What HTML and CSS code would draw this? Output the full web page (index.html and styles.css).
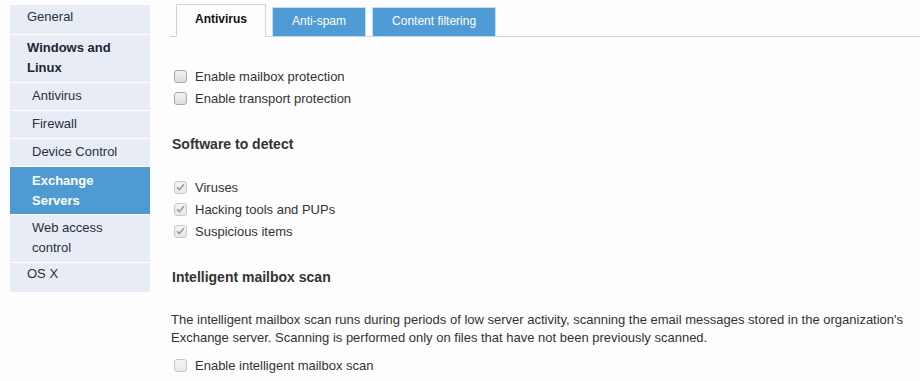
FILE: index.html
```html
<!DOCTYPE html>
<html lang="en">

<head>
    <meta charset="UTF-8">
    <meta name="viewport" content="width=device-width, initial-scale=1.0">
    <title>Exchange Servers</title>
    <link rel="stylesheet" href="styles.css">
</head>

<body>
    <div class="page">
        <ul class="sidebar">
            <li class="item top">General</li>
            <li class="item group">Windows and<br>Linux</li>
            <li class="item sub">Antivirus</li>
            <li class="item sub">Firewall</li>
            <li class="item sub">Device Control</li>
            <li class="item sub active">Exchange<br>Servers</li>
            <li class="item sub">Web access<br>control</li>
            <li class="item last">OS X</li>
        </ul>

        <div class="content">
            <div class="tabs">
                <div class="tab current">Antivirus</div>
                <div class="tab">Anti-spam</div>
                <div class="tab">Content filtering</div>
            </div>

            <div class="options first">
                <label class="check"><span class="box"></span>Enable mailbox protection</label>
                <label class="check"><span class="box"></span>Enable transport protection</label>
            </div>

            <h3>Software to detect</h3>
            <div class="options">
                <label class="check disabled"><span class="box"><svg width="9" height="8" viewBox="0 0 9 8"><path d="M1 4.2 3.4 6.6 8 1.2" fill="none" stroke="#9a9a9a" stroke-width="1.6"/></svg></span>Viruses</label>
                <label class="check disabled"><span class="box"><svg width="9" height="8" viewBox="0 0 9 8"><path d="M1 4.2 3.4 6.6 8 1.2" fill="none" stroke="#9a9a9a" stroke-width="1.6"/></svg></span>Hacking tools and PUPs</label>
                <label class="check disabled"><span class="box"><svg width="9" height="8" viewBox="0 0 9 8"><path d="M1 4.2 3.4 6.6 8 1.2" fill="none" stroke="#9a9a9a" stroke-width="1.6"/></svg></span>Suspicious items</label>
            </div>

            <h3>Intelligent mailbox scan</h3>
            <p class="note">The intelligent mailbox scan runs during periods of low server activity, scanning the email messages stored in the organization's Exchange server. Scanning is performed only on files that have not been previously scanned.</p>
            <div class="options last">
                <label class="check disabled"><span class="box"></span>Enable intelligent mailbox scan</label>
            </div>
        </div>
    </div>
</body>

</html>
```

FILE: styles.css
```css
* {
    margin: 0;
    padding: 0;
    box-sizing: border-box;
    font-family: "Liberation Sans", Arial, sans-serif;
}

body {
    background: #fdfdfd;
    color: #333;
    font-size: 13px;
}

.page {
    display: flex;
    align-items: flex-start;
}

/* menu da esquerda */
.sidebar {
    list-style: none;
    width: 140px;
    margin: 5px 0 0 10px;
    padding: 2px 0;
    background: #e8edf5;
}

.item {
    padding: 3px 8px 4px 17px;
    line-height: 20px;
    color: #27303d;
    border-bottom: 1px solid #fff;
}

.item.top {
    padding-top: 0;
    padding-bottom: 7px;
}

.item.group {
    font-weight: bold;
    color: #1d2533;
}

.item.sub {
    padding-left: 22px;
}

.item.active {
    padding-top: 4px;
    padding-bottom: 3px;
    background: #4e9ad3;
    color: #fff;
    font-weight: bold;
}

.item.last {
    padding-top: 1px;
    padding-bottom: 6px;
    border-bottom: none;
}

.content {
    flex: 1;
    margin-left: 20px;
}

/* abas */
.tabs {
    display: flex;
    align-items: flex-end;
    gap: 6px;
    height: 37px;
    padding-left: 6px;
    border-bottom: 1px solid #c6d9eb;
}

.tab {
    height: 29px;
    padding: 0 19px;
    line-height: 27px;
    font-size: 12px;
    color: #fff;
    background: #4f9bd5;
    border: 1px solid #c9def0;
    border-bottom: none;
}

.tab.current {
    height: 33px;
    margin-bottom: -1px;
    padding: 0 18px 3px;
    line-height: 28px;
    font-weight: bold;
    color: #111;
    background: #fdfdfd;
    border: 1px solid #c6d9eb;
    border-bottom: 1px solid #fdfdfd;
}

.options {
    margin-top: 22px;
    padding-left: 4px;
}

.options.first {
    margin-top: 28px;
}

.options.last {
    margin-top: 7px;
}

.check {
    display: flex;
    align-items: center;
    height: 22px;
    color: #333;
}

.box {
    display: flex;
    align-items: center;
    justify-content: center;
    width: 13px;
    height: 13px;
    margin-right: 8px;
    border: 1px solid #a9a9a9;
    border-radius: 3px;
    background: linear-gradient(#f2f2f2, #dedede);
}

.check.disabled .box {
    border-color: #c8c8c8;
    background: linear-gradient(#f4f4f4, #e8e8e8);
}

h3 {
    margin-top: 25px;
    padding-left: 2px;
    font-size: 14px;
    line-height: 20px;
    color: #333;
}

.note {
    margin-top: 24px;
    padding-left: 1px;
    line-height: 18px;
}
```
